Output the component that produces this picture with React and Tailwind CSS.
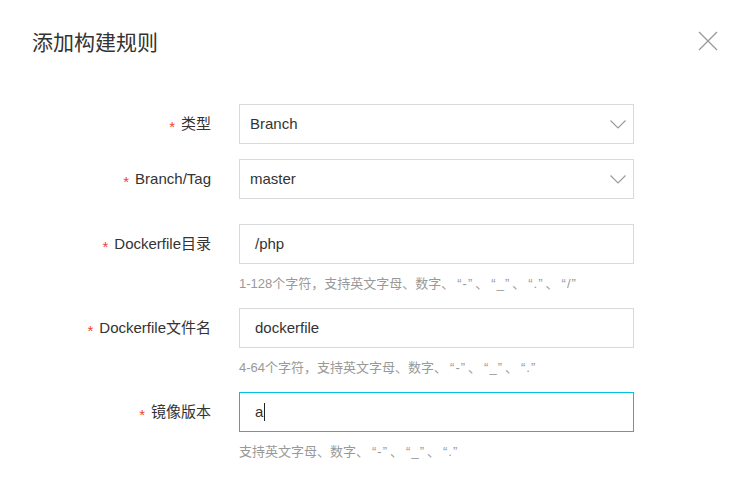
import React from "react";

const O = () => <span className="ml-[3px] mr-[1px]">“</span>;
const C = () => <span className="ml-[1px] mr-[3px]">”</span>;

const Label = ({ text }) => (
  <div className="w-[239px] pr-[28px] h-[40px] flex items-center justify-end shrink-0">
    <span className="text-[#f04134] mr-[6px] text-[15px] translate-y-[3px]">*</span>
    <span className="text-[#333] text-[15px]">{text}</span>
  </div>
);

const Chevron = () => (
  <svg width="16" height="9" viewBox="0 0 16 9" className="absolute right-[7px] top-[15px]">
    <path d="M0.5 0.5 L8 8 L15.5 0.5" fill="none" stroke="#999" strokeWidth="1.1" />
  </svg>
);

const Select = ({ value }) => (
  <div className="relative w-[395px] h-[40px] border border-[#d9d9d9] flex items-center pl-[10px] text-[15px] text-[#333]">
    {value}
    <Chevron />
  </div>
);

const Input = ({ value, focused, cursor }) => (
  <div
    className={
      "w-[395px] h-[40px] border flex items-center pl-[15px] text-[15px] text-[#333] " +
      (focused ? "border-[#00c1de]" : "border-[#d9d9d9]")
    }
  >
    <span>{value}</span>
    {cursor && <span className="inline-block w-px h-[18px] bg-[#222] ml-[1px]" />}
  </div>
);

const Hint = ({ children }) => (
  <div className="mt-[11px] h-[18px] leading-[18px] text-[13px] text-[#999] whitespace-nowrap">
    {children}
  </div>
);

export default function App() {
  return (
    <div className="w-[744px] h-[496px] bg-white font-['Liberation_Sans','Noto_Sans_CJK_SC',sans-serif] overflow-hidden">
      <div className="h-[82px] flex items-center justify-between pl-[32px] pr-[26px]">
        <div className="text-[21px] text-[#333] font-['Noto_Sans_CJK_SC',sans-serif] leading-none">
          添加构建规则
        </div>
        <svg width="20" height="20" viewBox="0 0 20 20">
          <path d="M1 1 L19 19 M19 1 L1 19" stroke="#999" strokeWidth="1.3" fill="none" />
        </svg>
      </div>

      <div className="mt-[22px]">
        <div className="flex items-start mb-[15px]">
          <Label text="类型" />
          <Select value="Branch" />
        </div>
        <div className="flex items-start mb-[25px]">
          <Label text="Branch/Tag" />
          <Select value="master" />
        </div>
        <div className="flex items-start mb-[15px]">
          <Label text="Dockerfile目录" />
          <div>
            <Input value="/php" />
            <Hint>
              1-128个字符，支持英文字母、数字、<O />-<C />、<O />_<C />、<O />.<C />、<O />/<C />
            </Hint>
          </div>
        </div>
        <div className="flex items-start mb-[15px]">
          <Label text="Dockerfile文件名" />
          <div>
            <Input value="dockerfile" />
            <Hint>
              4-64个字符，支持英文字母、数字、<O />-<C />、<O />_<C />、<O />.<C />
            </Hint>
          </div>
        </div>
        <div className="flex items-start">
          <Label text="镜像版本" />
          <div>
            <Input value="a" focused cursor />
            <Hint>
              支持英文字母、数字、<O />-<C />、<O />_<C />、<O />.<C />
            </Hint>
          </div>
        </div>
      </div>
    </div>
  );
}
